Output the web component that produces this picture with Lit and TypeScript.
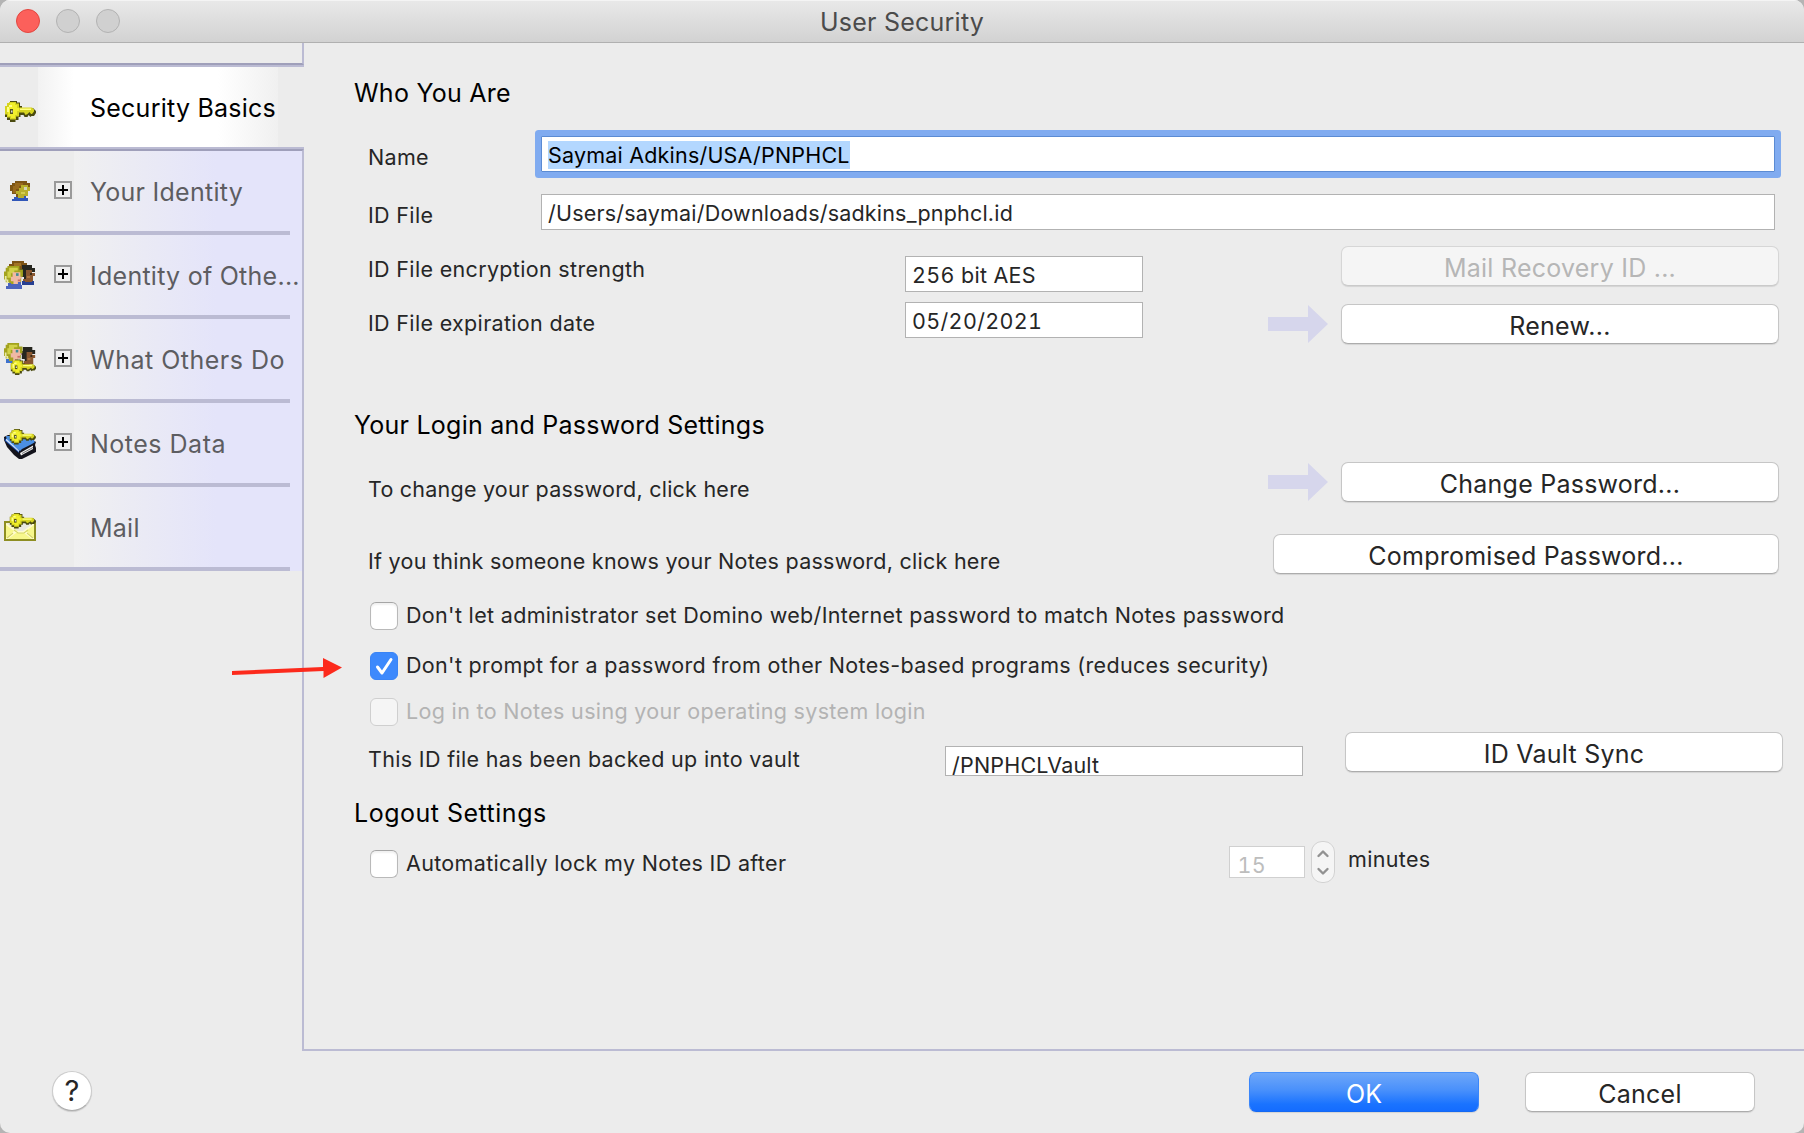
import { LitElement, html, css, svg, nothing } from "lit";
import { customElement, property } from "lit/decorators.js";
import { classMap } from "lit/directives/class-map.js";

const key = svg`
  <path d="M6 0h7v1.500h3v3.500h2v2h11l3 3v2l-2 3h-2.500l-1 1-2-2-1 2h-3l-1-2h-3v2h-2v3h-3v2H6v-2H3v-3H1V5h2V2h3z" fill="#4a4a10"/>
  <path d="M5 1h7v1.500h3v4h13l2 2v2l-2 2.500h-1l-1.500-2-2 2-2 1-1.500-2.500h-5v4h-3v3H6v-2H3v-3H1V5h2V2h2z" fill="#d6d420"/>
  <path d="M6 2h5v2h2v3h2v3h-2v4h-2v3H7v-2H4V6h2z" fill="#f1ef2c"/>
  <path d="M5 4h3v2H5v5H3V6h2zM16 7.500h11v1.500H16z" fill="#ffff86"/>
  <path d="M6 8h3v5H6z" fill="#56561c"/><path d="M7 9.500h1.500v2H7z" fill="#d8d8d8"/>`;

const blond = svg`
  <path d="M4 0h14v4h4v8h-2v6h-4v3H6v-3H2v-3H0V6h2V2h2z" fill="#a3a31e"/>
  <path d="M6 2h10v3h-4v3H8v5H4V6h2z" fill="#d2d24a"/>
  <path d="M10 7h9v5h2v2h-2v4h-3v3h-5v-4H8v-5h2z" fill="#efb9a4"/>
  <path d="M14 8h3v3h-3z" fill="#3f8b94"/><path d="M16 15h3v2h-3z" fill="#c96f66"/>
  <path d="M1 11h2v4h2v4H3v-3H1z" fill="#e9e9a8"/>`;

const dark = svg`
  <path d="M4 0h10v3h3v4h-5v8H6v-3H3V8H1V4h3z" fill="#26261f"/>
  <path d="M8 5h6v3h3v3h-2v6h-4v3H5v-6h3z" fill="#8a5730"/>
  <path d="M12 8h2v2h-2z" fill="#3a2a18"/><path d="M9 11h3v2H9z" fill="#ad7440"/>`;

const icons: Record<string, unknown> = {
  key: svg`<g transform="translate(0 10)">${key}</g>`,
  person: svg`
    <path d="M11 6h12v2h3v4h-3v8h-4v2h-7v-3H8v-3H6V10h2V8h3z" fill="#7d5514"/>
    <path d="M11 8h8v3h-4v3h-3v4H9v-7h2z" fill="#98691c"/>
    <path d="M17 10h7v2h2v4h-2v5h-4v3h-6v-5h-2v-3h3v-3h2z" fill="#b9b02a"/>
    <path d="M20 12h3v3h-3z" fill="#d3d3b8"/><path d="M17 17h4v2h-4z" fill="#d5cf4f"/>
    <path d="M10 22h4v1h6v-2h2v2h2v3H8v-2h2z" fill="#3157b8"/>`,
  people: svg`
    <path d="M8 2h12v2h3v9H5V5h3z" fill="#7c5215"/><path d="M10 4h7v3h-7z" fill="#a17325"/>
    <g transform="translate(14 6)">${dark}</g><path d="M18 22h3v1h7v-1h2v4H18z" fill="#273f92"/>
    <g transform="translate(0 7) scale(.86 .9)">${blond}</g>
    <path d="M4 24h3v1h7v-2h3v3h1v4H2v-3h2z" fill="#4b63bd"/>`,
  peopleKey: svg`
    <g transform="translate(15 4) scale(.95 1)">${dark}</g>
    <g transform="scale(.84 .86)">${blond}</g>
    <path d="M2 16h3v2h4v2H2z" fill="#3f72cc"/>
    <g transform="translate(6 16.500) scale(.82 .74)">${key}</g>`,
  book: svg`
    <path d="M0 10l4-2h14l8 3 6 4-1 3 1 3v4l-8 4-6 3h-3l-5-4-7-8-3-7z" fill="#14141c"/>
    <path d="M2 9h13l12 1 4 5-3 2-10 5-2 2-3-2-5-4-5-4z" fill="#4b8fe3"/>
    <path d="M16 26l13-7.500V22l-12 6.500z" fill="#f1f1f1"/><path d="M18 26.500l11-6" stroke="#777"/>
    <path d="M0 11l15 13v2L1 14z" fill="#1d4fae"/><path d="M2 11.500l13 12v1.500L2 13.500z" fill="#cfe2fb"/>
    <g transform="translate(5 2) scale(.84 .74)">${key}</g>`,
  mail: svg`
    <path d="M0 10h32v20H0z" fill="#8e8e22"/><path d="M2 12h28v16H2z" fill="#f7f78c"/>
    <path d="M2 12h28l-10 8h-6z" fill="#e9e9e0"/><path d="M2 12l11 8h6l11-8v2l-8 6 8 7v1h-2l-8-6h-8l-8 6H2v-1l8-7-8-6z" fill="#fffccf"/>
    <path d="M10 19l4 3h6l4-3M3 27l6-5M29 27l-6-5" fill="none" stroke="#d6d666" stroke-width="1.200"/>
    <g transform="translate(5 2) scale(.84 .74)">${key}</g>`,
};

const type = css`
  .text { font-size: 21.5px; line-height: 26px; letter-spacing: 0.33px; white-space: pre; color: #262626; }
  .large { font-size: 25px; line-height: 30px; letter-spacing: 0.24px; }
  .tight { letter-spacing: 0.2px; }
  .change-text { letter-spacing: 0.23px; }
  .medium { letter-spacing: 0.26px; }
  .wide { letter-spacing: 0.5px; }
`;

@customElement("push-button")
export class PushButton extends LitElement {
  @property() kind = "";
  static styles = [type, css`
    :host { display: block; height: 40px; flex: none; }
    .button { box-sizing: border-box; width: 100%; height: 40px; padding: 0; display: block; text-align: center;
      font-family: inherit; background: #fff; border: 1px solid #c6c6c6; border-bottom-color: #acacac; border-radius: 7px;
      box-shadow: 0 1px 1px rgba(0, 0, 0, 0.1); }
    .disabled { background: #f5f5f5; color: #b6b6b6; border-color: #d6d6d6; border-bottom-color: #cacaca; }
    .primary { color: #fff; border-color: #4a91f8 #3a86fa #1569f2; background: linear-gradient(#6ea7f9, #4990fb 45%, #1a73ff 82%, #146cff); letter-spacing: 0; }
    .caption { display: block; margin-top: 4px; }
  `];
  render() {
    return html`<button class=${classMap({ button: true, text: true, large: true, disabled: this.kind === "disabled", primary: this.kind === "primary" })}
      ?disabled=${this.kind === "disabled"}><span class="caption"><slot></slot></span></button>`;
  }
}

@customElement("check-row")
export class CheckRow extends LitElement {
  @property({ type: Boolean }) checked = false;
  @property({ type: Boolean }) disabled = false;
  static styles = [type, css`
    :host { display: block; }
    .row { display: flex; gap: 8px; height: 28px; }
    .box { box-sizing: border-box; width: 28px; height: 28px; border-radius: 6px; background: #fff; border: 1px solid #b9b9b9;
      border-top-color: #a5a5a5; box-shadow: inset 0 2px 2px rgba(0, 0, 0, 0.06); }
    .on { background: #3d89fc; border-color: #3a84f5; box-shadow: none; }
    .off { background: #f5f5f5; border-color: #cfcfcf; box-shadow: none; }
    .muted { color: #b3b3b3; }
    .mark { display: block; width: 26px; height: 26px; }
  `];
  render() {
    return html`<label class="row">
      <span class=${classMap({ box: true, on: this.checked, off: this.disabled })}>${this.checked
        ? html`<svg class="mark" viewBox="0 0 26 26"><path d="M6.500 14l4.500 6L20 6.500" fill="none" stroke="#fff" stroke-width="3" stroke-linecap="round" stroke-linejoin="round"/></svg>`
        : nothing}</span>
      <span class=${classMap({ text: true, muted: this.disabled })}><slot></slot></span>
    </label>`;
  }
}

interface Tab { label: string; icon: string; expandable: boolean; tracking: string }
const tabs: Tab[] = [
  { label: "Your Identity", icon: "person", expandable: true, tracking: "medium" },
  { label: "Identity of Othe...", icon: "people", expandable: true, tracking: "medium" },
  { label: "What Others Do", icon: "peopleKey", expandable: true, tracking: "wide" },
  { label: "Notes Data", icon: "book", expandable: true, tracking: "wide" },
  { label: "Mail", icon: "mail", expandable: false, tracking: "" },
];

@customElement("side-tabs")
export class SideTabs extends LitElement {
  static styles = [type, css`
    :host { display: flex; flex-direction: column; width: 304px; flex: none; }
    .cap { box-sizing: border-box; height: 22px; border-right: 2px solid #bbbbd3; border-bottom: 2px solid #9f9fba; }
    .under { height: 2px; background: #bbbbd3; }
    .tab { display: flex; box-sizing: border-box; height: 84px; padding-left: 4px; }
    .active { height: 80px; background: linear-gradient(90deg, #f2f2f2, #fff 36px, #fff 180px, #f0f0f0) 38px 0 / 240px 100% no-repeat; }
    .list { border-top: 2px solid #9f9fba; border-right: 2px solid #bbbbd3; }
    .item { background: linear-gradient(#bbbbd3, #bbbbd3) 0 100% / 290px 4px no-repeat,
      linear-gradient(90deg, #f0f0f0, #e4e4fa 142px) 74px 0 / 228px 100% no-repeat; }
    .icon { width: 32px; height: 32px; margin-top: 24px; flex: none; }
    .slot { width: 36px; margin: 30px 0 0 18px; }
    .plus { display: block; width: 18px; height: 18px; }
    .label { margin-top: 26px; color: #5d5d61; }
    .current { color: #000; }
    .rest { flex: 1; border-right: 2px solid #bbbbd3; }
  `];
  private icon(name: string) {
    return html`<svg class="icon" viewBox="0 0 32 32">${icons[name]}</svg>`;
  }
  render() {
    return html`
      <div class="cap"></div><div class="under"></div>
      <div class="tab active">${this.icon("key")}<span class="slot"></span><span class="text large label current">Security Basics</span></div>
      <div class="under"></div>
      <div class="list">${tabs.map((t) => html`<div class="tab item">${this.icon(t.icon)}
        <span class="slot">${t.expandable
          ? html`<svg class="plus" viewBox="0 0 18 18"><path d="M1 1h16v16H1z" fill="#efefef" stroke="#9a9a9a" stroke-width="2"/><path d="M4 9h10M9 4v10" stroke="#000" stroke-width="2"/></svg>`
          : nothing}</span>
        <span class="text large label ${t.tracking}">${t.label}</span></div>`)}</div>
      <div class="rest"></div>`;
  }
}

@customElement("app-root")
export class AppRoot extends LitElement {
  static styles = [type, css`
    :host { display: block; height: 1133px; font-family: Inter, "Liberation Sans", sans-serif; background: #b4b4b4; }
    .window { position: relative; display: flex; flex-direction: column; height: 1133px; background: #ececec; border-radius: 10px; overflow: hidden; }
    .titlebar { box-sizing: border-box; height: 43px; flex: none; display: grid; grid-template-columns: 1fr auto 1fr;
      background: linear-gradient(#e9e9e9, #d2d2d2); border-bottom: 1px solid #b0b0b0; box-shadow: inset 0 1px #f4f4f4; }
    .lights { display: flex; gap: 16px; padding: 9px 0 0 16px; }
    .light { box-sizing: border-box; width: 24px; height: 24px; border-radius: 50%; background: #d0d0d0; border: 1px solid #b2b2b2; }
    .close { background: #fc605b; border-color: #e2463f; }
    .title { margin-top: 7px; color: #4b4b4b; }
    .body { display: flex; height: 1008px; flex: none; }
    .panel { box-sizing: border-box; flex: 1; min-width: 0; border-bottom: 2px solid #bbbbd3; padding: 35px 25px 0 64px; }
    .heading { margin: 0 0 0 -14px; height: 30px; font-weight: 400; color: #000; }
    .row { display: flex; align-items: flex-start; }
    .push { margin-left: auto; }
    .name { height: 64px; margin-top: 22px; }
    .file { height: 46px; }
    .strength { height: 56px; padding-top: 6px; }
    .expiry { height: 108px; }
    .change { height: 72px; margin-top: 22px; }
    .compromised { height: 68px; }
    .vault { height: 66px; margin-right: -4px; }
    .lock { margin-top: 13px; }
    .c1 { margin-bottom: 22px; }
    .c2 { margin-bottom: 18px; }
    .c3 { margin-bottom: 6px; }
    .check { margin-left: 2px; }
    .short { width: 173px; }
    .mid { width: 537px; }
    .vault-label { width: 577px; }
    .d2 { margin-top: 2px; }
    .d8 { margin-top: 8px; }
    .d14 { margin-top: 14px; }
    .field { box-sizing: border-box; height: 36px; border: 1px solid #b2b2b2; background: #fff; padding: 5px 0 0 6px; overflow: hidden; }
    .long { width: 1234px; }
    .focus { margin-top: 6px; border-color: #5b8bd3; box-shadow: 0 0 0 6px #80abf0; border-radius: 1px; padding-top: 4px; }
    .selection { display: inline-block; height: 28px; line-height: 28px; background: #b3d7ff; color: #000; }
    .value { width: 238px; }
    .digits { font-variant-numeric: tabular-nums; }
    .at10 { margin-top: 10px; }
    .vault-field { width: 358px; height: 30px; margin-top: 14px; padding: 5px 0 0 6px; }
    .minutes-field { width: 76px; height: 32px; margin: 5px 6px 0 0; padding: 5px 0 0 7.500px; border-color: #d0d0d0; color: #bdbdbd; }
    .arrow { width: 60px; height: 38px; margin: 3px 13px 0 auto; }
    .raised { margin-top: 1px; }
    .b437 { width: 438px; }
    .b506 { width: 506px; }
    .lock-check { width: 859px; margin-top: 9px; }
    .stepper { width: 24px; height: 42px; }
    .minutes { margin: 5px 0 0 13px; }
    .footer { flex: 1; display: flex; gap: 46px; padding: 21px 49px 0 52px; }
    .help { box-sizing: border-box; width: 40px; height: 40px; margin-right: auto; margin-top: -1px; padding: 0 0 1px; border: 1px solid #cbcbcb; border-bottom-color: #aeaeae; border-radius: 50%;
      background: #fff; font-family: inherit; font-size: 29px; text-align: center; box-shadow: 0 1px 1px rgba(0, 0, 0, 0.14); letter-spacing: 0; }
    .action { width: 230px; }
    .pointer { position: absolute; left: 230px; top: 656px; width: 114px; height: 24px; }
  `];
  private arrow(cls = "") {
    return html`<svg class="arrow ${cls}" viewBox="0 0 60 38"><path d="M0 12h40V0l20 19-20 19V26H0z" fill="#d6d6ec"/></svg>`;
  }
  render() {
    return html`<div class="window">
      <div class="titlebar">
        <div class="lights"><span class="light close"></span><span class="light"></span><span class="light"></span></div>
        <div class="text large title">User Security</div>
      </div>
      <div class="body">
        <side-tabs></side-tabs>
        <main class="panel">
          <h2 class="text large heading">Who You Are</h2>
          <div class="row name"><span class="text short d14">Name</span>
            <div class="text field long focus tight"><span class="selection">Saymai Adkins/USA/PNPHCL</span></div></div>
          <div class="row file"><span class="text short d8">ID File</span>
            <div class="text field long tight">/Users/saymai/Downloads/sadkins_pnphcl.id</div></div>
          <div class="row strength"><span class="text mid at10">ID File encryption strength</span>
            <div class="text field value digits at10">256 bit AES</div>
            <push-button class="push b437" kind="disabled">Mail Recovery ID ...</push-button></div>
          <div class="row expiry"><span class="text mid d8">ID File expiration date</span>
            <div class="text field value digits">05/20/2021</div>
            ${this.arrow()}<push-button class="b437 d2">Renew...</push-button></div>
          <h2 class="text large heading">Your Login and Password Settings</h2>
          <div class="row change"><span class="text d14 change-text">To change your password, click here</span>
            ${this.arrow("raised")}<push-button class="b437">Change Password...</push-button></div>
          <div class="row compromised"><span class="text d14 medium">If you think someone knows your Notes password, click here</span>
            <push-button class="push b506">Compromised Password...</push-button></div>
          <check-row class="check c1">Don't let administrator set Domino web/Internet password to match Notes password</check-row>
          <check-row class="check c2" checked>Don't prompt for a password from other Notes-based programs (reduces security)</check-row>
          <check-row class="check c3" disabled>Log in to Notes using your operating system login</check-row>
          <div class="row vault"><span class="text vault-label d14">This ID file has been backed up into vault</span>
            <div class="text field vault-field tight">/PNPHCLVault</div>
            <push-button class="push b437">ID Vault Sync</push-button></div>
          <h2 class="text large heading wide">Logout Settings</h2>
          <div class="row lock"><check-row class="check lock-check">Automatically lock my Notes ID after</check-row>
            <div class="text field minutes-field digits">15</div>
            <svg class="stepper" viewBox="0 0 24 42"><rect x=".5" y=".5" width="23" height="41" rx="10.500" fill="#f5f5f5" stroke="#d2d2d2"/>
              <path d="M7.500 15l4.500-4.500 4.500 4.500M7.500 28l4.500 4.500 4.500-4.500" fill="none" stroke="#929292" stroke-width="2.400" stroke-linecap="round" stroke-linejoin="round"/></svg>
            <span class="text minutes">minutes</span></div>
        </main>
      </div>
      <div class="footer">
        <button class="text help">?</button>
        <push-button class="action" kind="primary">OK</push-button>
        <push-button class="action">Cancel</push-button>
      </div>
      <svg class="pointer" viewBox="0 0 114 24"><path d="M2 15l91-4V2l19 9.500L93.500 22v-7L2 19z" fill="#fc2a1c"/></svg>
    </div>`;
  }
}
